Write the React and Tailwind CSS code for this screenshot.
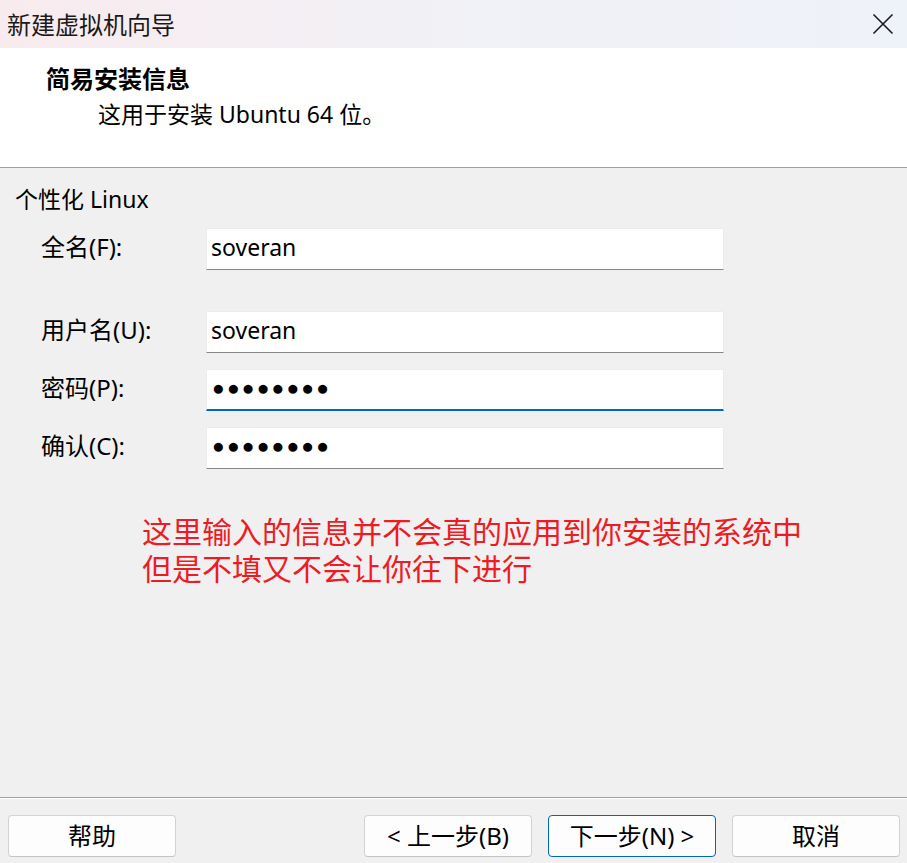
export default function App() {
    return (
        <div className="w-[907px] h-[863px] flex flex-col bg-[#f0f0f0] text-black font-['Noto_Sans','Noto_Sans_CJK_SC',sans-serif] overflow-hidden">
            <TitleBar />
            <Header />
            <div className="h-px bg-[#a0a0a0]" />
            <div className="flex-1 flex flex-col">
                <p className="ml-[15px] mt-[15px] h-[32px] leading-[32px] text-[23px]">个性化 Linux</p>
                <div className="ml-[41px] mt-[13px] flex flex-col">
                    <FieldRow label="全名(F):" value="soveran" />
                    <FieldRow label="用户名(U):" value="soveran" className="mt-[41px]" />
                    <FieldRow label="密码(P):" password focused className="mt-[16px]" />
                    <FieldRow label="确认(C):" password className="mt-[16px]" />
                </div>
                <div className="ml-[142px] mt-[46px] flex flex-col gap-[7px] text-[30px] leading-[30px] text-[#ed1c24] font-['Noto_Sans_CJK_SC',sans-serif]">
                    <p>这里输入的信息并不会真的应用到你安装的系统中</p>
                    <p>但是不填又不会让你往下进行</p>
                </div>
            </div>
            <Footer />
        </div>
    )
}

function TitleBar() {
    return (
        <div className="h-[48px] flex items-center justify-between pl-[7px] pr-[13px] bg-gradient-to-r from-[#f8ebee] via-[#f1f1f6] to-[#eef2f9]">
            <span className="text-[24px] leading-[32px] text-[#1a1a1a] font-['Noto_Sans_CJK_SC',sans-serif] -mt-[1px]">新建虚拟机向导</span>
            <svg width="22" height="22" viewBox="0 0 22 22" className="-mt-[1px]">
                <path d="M1.5 1.5 L20.5 20.5 M20.5 1.5 L1.5 20.5" stroke="#1a1a1a" strokeWidth="1.6" fill="none" />
            </svg>
        </div>
    )
}

function Header() {
    return (
        <div className="h-[119px] bg-white pl-[46px] pt-[15px]">
            <p className="h-[32px] leading-[32px] text-[24px] font-bold">简易安装信息</p>
            <p className="ml-[52px] mt-[3px] h-[32px] leading-[32px] text-[23px]">这用于安装 Ubuntu 64 位。</p>
        </div>
    )
}

function FieldRow({ label, value, password, focused, className = "" }) {
    return (
        <div className={"flex items-center h-[42px] " + className}>
            <span className="w-[165px] text-[24px] leading-[32px] -mt-[5px]">{label}</span>
            <div
                className={
                    "w-[518px] h-[42px] bg-white border-t border-l border-r border-[#ececec] flex items-center pl-[4px] pb-[4px] " +
                    (focused ? "border-b-2 border-b-[#0067c0]" : "border-b border-b-[#868686]")
                }
            >
                {password ? (
                    <span className="pl-[1px] text-[21px] tracking-[2.2px] leading-[32px] font-['Liberation_Sans',sans-serif]">●●●●●●●●</span>
                ) : (
                    <span className="text-[23px] leading-[32px]">{value}</span>
                )}
            </div>
        </div>
    )
}

function Footer() {
    return (
        <div className="flex flex-col">
            <div className="h-px bg-[#a0a0a0]" />
            <div className="h-px bg-white" />
            <div className="flex items-center pl-[8px] pr-[7px] pt-[16px] pb-[6px]">
                <Button>帮助</Button>
                <div className="flex-1" />
                <div className="flex gap-[16px]">
                    <Button>&lt; 上一步(B)</Button>
                    <Button focused>下一步(N) &gt;</Button>
                    <Button>取消</Button>
                </div>
            </div>
        </div>
    )
}

function Button({ children, focused }) {
    return (
        <button
            className={
                "w-[168px] h-[42px] rounded-[4px] bg-[#fdfdfd] text-[24px] leading-[32px] text-black flex items-center justify-center " +
                (focused ? "border border-[#0067c0]" : "border border-[#d3d3d3] border-b-[#c4c4c4]")
            }
        >
            {children}
        </button>
    )
}
